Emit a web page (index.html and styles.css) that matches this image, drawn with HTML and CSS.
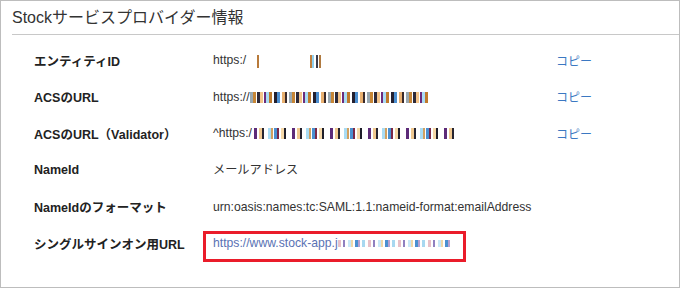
FILE: index.html
```html
<!DOCTYPE html>
<html lang="ja">
<head>
	<meta charset="UTF-8">
	<title>Stockサービスプロバイダー情報</title>
<link rel="stylesheet" href="styles.css">
</head>
<body>
	<div class="panel">
		<h2 class="panel_title">Stockサービスプロバイダー情報</h2>

		<div class="info">
			<div class="label">エンティティID</div>
			<div class="value">https:/<span class="mask mask_id"></span></div>
			<a href="javascript:;" class="copy">コピー</a>

			<div class="label">ACSのURL</div>
			<div class="value">https://<span class="mask mask_acs"></span></div>
			<a href="javascript:;" class="copy">コピー</a>

			<div class="label">ACSのURL（Validator）</div>
			<div class="value">^https:/<span class="mask mask_val"></span></div>
			<a href="javascript:;" class="copy">コピー</a>

			<div class="label">NameId</div>
			<div class="value">メールアドレス</div>
			<div></div>

			<div class="label">NameIdのフォーマット</div>
			<div class="value">urn:oasis:names:tc:SAML:1.1:nameid-format:emailAddress</div>
			<div></div>

			<div class="label">シングルサインオン用URL</div>
			<div class="value"><a href="javascript:;" class="sso">https://www.stock-app.j<span class="mask mask_sso"></span></a></div>
			<div></div>
		</div>
	</div>
</body>
</html>
```

FILE: styles.css
```css
*{margin: 0; padding: 0;}
a{text-decoration: none;}
body{background: #fff;}
.panel{
	width: 680px;
	height: 288px;
	box-sizing: border-box;
	border: 1px solid #bdbdbd;
	font-family: "Liberation Sans", "Noto Sans CJK JP", sans-serif;
	color: #333;
}
.panel_title{
	margin-left: 11px;
	height: 33px;
	line-height: 33px;
	border-bottom: 1px solid #c8c8c8;
	font-size: 16px;
	font-weight: normal;
	color: #333;
}
.info{
	display: grid;
	grid-template-columns: 179px 343px auto;
	grid-auto-rows: 36.6px;
	align-items: center;
	padding: 7px 0 0 33px;
}
.label{
	font-size: 12.5px;
	font-weight: bold;
	color: #222;
}
.value{
	font-size: 12.2px;
	line-height: 14px;
	white-space: nowrap;
}
.copy{
	font-size: 12px;
	color: #3b78c2;
}
.mask{
	display: inline-block;
	height: 11px;
	vertical-align: -2px;
}
.mask_id{
	width: 76px;
	height: 13px;
	vertical-align: -4px;
	background:
		linear-gradient(90deg, transparent 0 11px, #b87a3a 11px 13px, transparent 13px 64px, #c08040 64px 66px, #8fd0f0 66px 68px, transparent 68px 70px, #3a3a48 70px 72px, transparent 72px 73px, #b07a40 73px 75px, transparent 75px);
}
.mask_acs{
	width: 178px;
	background:
		repeating-linear-gradient(90deg, #9aa8b0 0 3px, #c78636 3px 6px, #fff 6px 7px, #2d2a3a 7px 10px, #f3c48a 10px 13px, #fff 13px 14px, #6b2c7c 14px 16px, #a9dcf4 16px 19px, #c07a2c 19px 22px, #fff 22px 24px, #232030 24px 27px, #4d8fd0 27px 30px, #fff 30px 32px, #e8b070 32px 35px, #3a2a2a 35px 37px, #fff 37px 39px);
}
.mask_val{
	width: 206px;
	background:
		repeating-linear-gradient(90deg, #fff 0 2px, #5c2a78 2px 5px, #fff 5px 7px, #f0c890 7px 10px, #262430 10px 12px, #fff 12px 16px, #a9dcf4 16px 19px, #d0a060 19px 21px, #fff 21px 22px, #4a90d0 22px 25px, #7a2848 25px 27px, #fff 27px 29px, #f5d8a8 29px 32px, #1e1e2a 32px 34px, #fff 34px 38px);
}
.sso{
	position: relative;
	display: inline-block;
	color: #5a72b4;
}
.sso::after{
	content: "";
	position: absolute;
	top: -5px;
	left: -10px;
	width: 263px;
	height: 31px;
	box-sizing: border-box;
	border: 3px solid #ea1c2a;
}
.mask_sso{
	width: 112px;
	height: 7px;
	vertical-align: 0;
	background:
		repeating-linear-gradient(90deg, #e8c0c8 0 3px, #fff 3px 5px, #9080c0 5px 7px, #fff 7px 10px, #c8e8f8 10px 13px, #f0d8a8 13px 15px, #fff 15px 17px, #4a90d0 17px 20px, #b8a0d0 20px 22px, #fff 22px 24px, #a8d8f0 24px 27px, #fff 27px 30px);
}
```
